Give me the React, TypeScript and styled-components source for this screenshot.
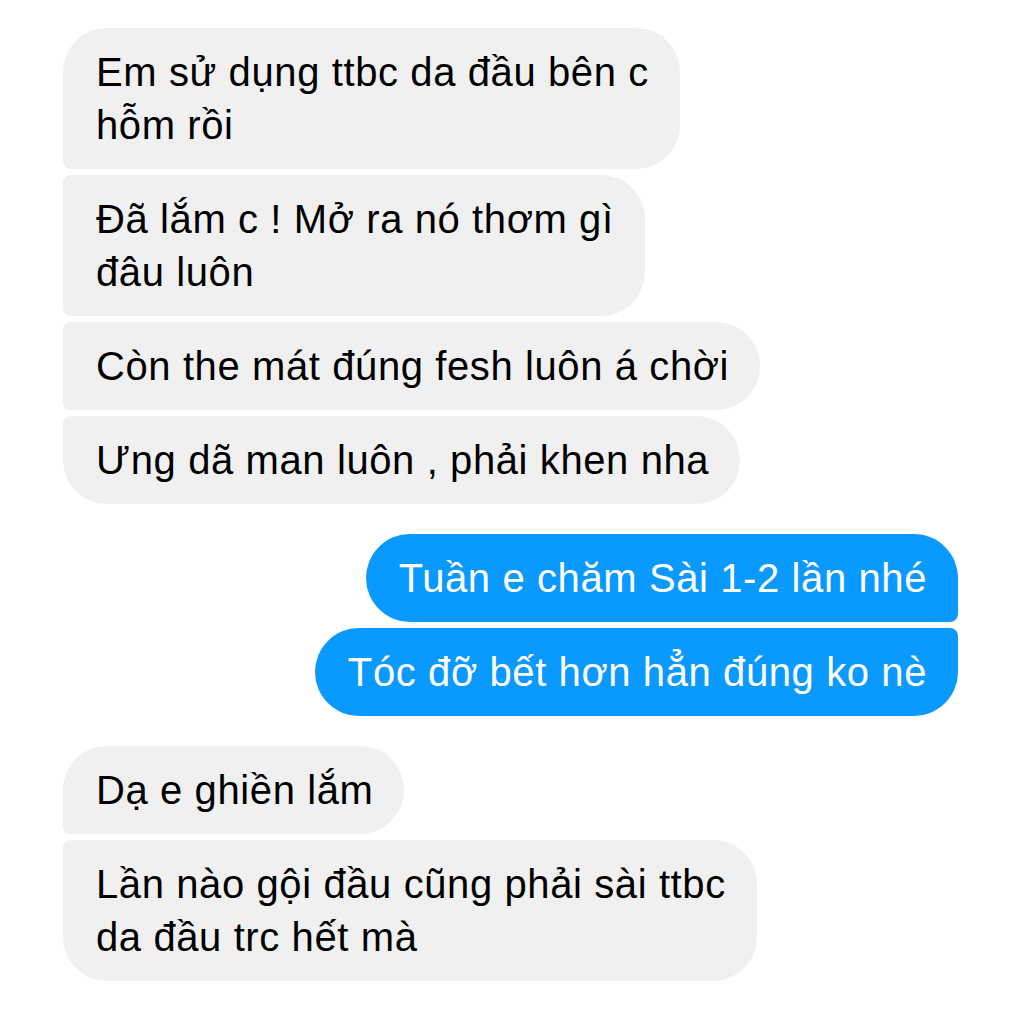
import styled, { createGlobalStyle } from 'styled-components'

const GlobalStyle = createGlobalStyle`
  html, body {
    margin: 0;
    padding: 0;
    background: #ffffff;
  }
`

const Thread = styled.div`
  width: 1024px;
  height: 1024px;
  box-sizing: border-box;
  padding: 28px 66px 0 63px;
  display: flex;
  flex-direction: column;
  gap: 30px;
  font-family: 'Liberation Sans', Arial, sans-serif;
  overflow: hidden;
`

const Group = styled.div<{ $mine?: boolean }>`
  display: flex;
  flex-direction: column;
  align-items: ${(p) => (p.$mine ? 'flex-end' : 'flex-start')};
  gap: 6px;
`

type Pos = 'single' | 'first' | 'middle' | 'last'

const big = '44px'
const small = '8px'

function corners(pos: Pos, mine?: boolean) {
  const top = pos === 'single' || pos === 'first' ? big : small
  const bottom = pos === 'single' || pos === 'last' ? big : small
  if (mine) return `${big} ${top} ${bottom} ${big}`
  return `${top} ${big} ${big} ${bottom}`
}

const Bubble = styled.div<{ $mine?: boolean; $pos: Pos }>`
  box-sizing: border-box;
  padding: 18px 31px 17px 33px;
  border-radius: ${(p) => corners(p.$pos, p.$mine)};
  background: ${(p) => (p.$mine ? '#0a99ff' : '#f0f0f0')};
  color: ${(p) => (p.$mine ? '#ffffff' : '#000000')};
  font-size: 40px;
  letter-spacing: 0.6px;
  line-height: 53px;
  white-space: nowrap;
`

type Msg = { lines: string[] }

const incomingA: Msg[] = [
  { lines: ['Em sử dụng ttbc da đầu bên c', 'hỗm rồi'] },
  { lines: ['Đã lắm c ! Mở ra nó thơm gì', 'đâu luôn'] },
  { lines: ['Còn the mát đúng fesh luôn á chời'] },
  { lines: ['Ưng dã man luôn , phải khen nha'] },
]

const outgoing: Msg[] = [
  { lines: ['Tuần e chăm Sài 1-2 lần nhé'] },
  { lines: ['Tóc đỡ bết hơn hẳn đúng ko nè'] },
]

const incomingB: Msg[] = [
  { lines: ['Dạ e ghiền lắm'] },
  { lines: ['Lần nào gội đầu cũng phải sài ttbc', 'da đầu trc hết mà'] },
]

function position(i: number, n: number): Pos {
  if (n === 1) return 'single'
  if (i === 0) return 'first'
  if (i === n - 1) return 'last'
  return 'middle'
}

function MessageGroup({ msgs, mine }: { msgs: Msg[]; mine?: boolean }) {
  return (
    <Group $mine={mine}>
      {msgs.map((m, i) => (
        <Bubble key={i} $mine={mine} $pos={position(i, msgs.length)}>
          {m.lines.map((l, j) => (
            <div key={j}>{l}</div>
          ))}
        </Bubble>
      ))}
    </Group>
  )
}

function App() {
  return (
    <>
      <GlobalStyle />
      <Thread>
        <MessageGroup msgs={incomingA} />
        <MessageGroup msgs={outgoing} mine />
        <MessageGroup msgs={incomingB} />
      </Thread>
    </>
  )
}

export default App
